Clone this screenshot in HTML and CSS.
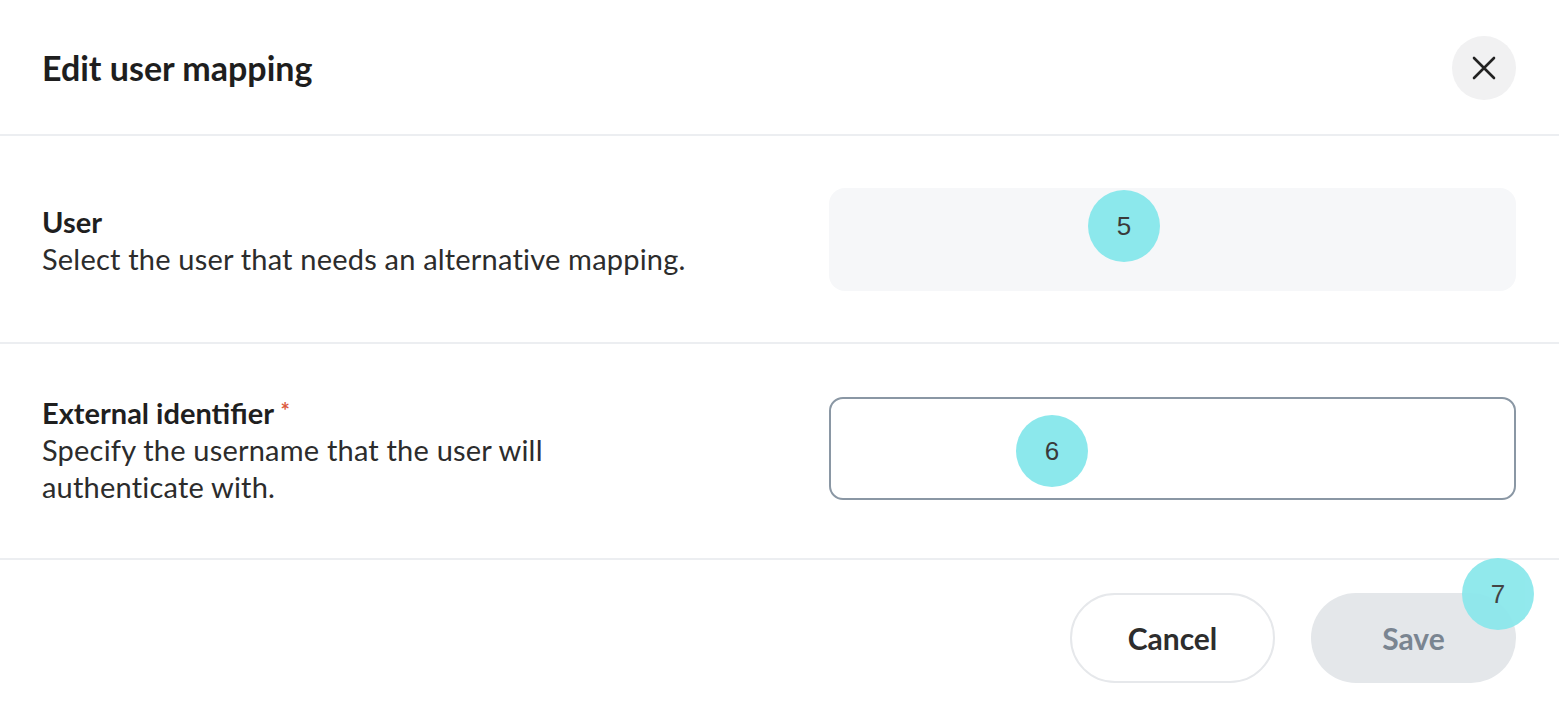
FILE: index.html
```html
<!doctype html>
<html lang="en">
<head>
    <meta charset="utf-8">
    <meta name="viewport" content="width=device-width, initial-scale=1">
    <title>Edit user mapping</title>
    <link rel="stylesheet" href="styles.css">
</head>
<body>
    <div class="modal">
        <header class="modal-header">
            <h1>Edit user mapping</h1>
            <button class="close" type="button" aria-label="Close">
                <svg width="24" height="24" viewBox="0 0 24 24" fill="none" stroke="#222" stroke-width="2.6" stroke-linecap="round">
                    <path d="M2 2L22 22M22 2L2 22"/>
                </svg>
            </button>
        </header>

        <section class="row">
            <div class="label">
                <h2>User</h2>
                <p>Select the user that needs an alternative mapping.</p>
            </div>
            <div class="field field-select">
                <span class="badge badge-5">5</span>
            </div>
        </section>

        <section class="row row-last">
            <div class="label">
                <h2>External identifier <span class="required">*</span></h2>
                <p>Specify the username that the user will authenticate with.</p>
            </div>
            <div class="field field-input">
                <span class="badge badge-6">6</span>
            </div>
        </section>

        <footer class="modal-footer">
            <button class="btn btn-cancel" type="button">Cancel</button>
            <button class="btn btn-save" type="button" disabled>
                Save
                <span class="badge badge-7">7</span>
            </button>
        </footer>
    </div>
</body>
</html>
```

FILE: styles.css
```css
/*
 * Reset
 */

*,
*::before,
*::after {
    box-sizing: border-box;
    margin: 0;
    padding: 0;
}

body {
    background-color: white;
    font-family: Lato, "Open Sans", sans-serif;
    height: 707px;
    overflow: hidden;
}

.modal {
    background-color: white;
    height: 699px;
    margin-top: 8px;
}

.modal-header {
    align-items: center;
    border-bottom: 2px solid #eceef1;
    display: flex;
    justify-content: space-between;
    padding: 28px 43px 34px 42px;
}

h1 {
    color: #1e1e1e;
    font-size: 34px;
    font-weight: 700;
    line-height: 1;
}

.close {
    align-items: center;
    background-color: #f1f1f2;
    border: none;
    border-radius: 50%;
    display: flex;
    height: 64px;
    justify-content: center;
    width: 64px;
}

.row {
    align-items: center;
    border-bottom: 2px solid #eceef1;
    display: flex;
    justify-content: space-between;
    padding: 52px 43px 51px 42px;
}

.row-last {
    padding: 48px 43px 53px 42px;
}

.label {
    color: #2c2c2c;
    font-size: 29px;
    letter-spacing: 0.2px;
    line-height: 37px;
    max-width: 660px;
}

.label h2 {
    color: #1f1f1f;
    font-size: 29px;
    font-weight: 700;
    letter-spacing: 0;
}

.required {
    color: #dc5a3c;
    font-size: 22px;
    vertical-align: 5px;
}

.field {
    height: 103px;
    position: relative;
    width: 687px;
}

.field-select {
    background-color: #f6f7f9;
    border-radius: 16px;
}

.field-input {
    border: 2px solid #8a97a4;
    border-radius: 14px;
}

.badge {
    align-items: center;
    background-color: #8ce8ec;
    border-radius: 50%;
    color: #3a3a3a;
    display: flex;
    font-family: "Liberation Sans", Arial, sans-serif;
    font-size: 26px;
    font-weight: 400;
    height: 72px;
    justify-content: center;
    position: absolute;
    width: 72px;
}

.badge-5 {
    left: 259px;
    top: 2px;
}

.badge-6 {
    left: 185px;
    top: 16px;
}

.badge-7 {
    left: 151px;
    opacity: 0.95;
    top: -35px;
}

.modal-footer {
    display: flex;
    gap: 36px;
    justify-content: flex-end;
    padding: 33px 43px 0 42px;
}

.btn {
    border-radius: 45px;
    font-family: Lato, "Open Sans", sans-serif;
    font-size: 30px;
    font-weight: 700;
    height: 90px;
    position: relative;
    width: 205px;
}

.btn-cancel {
    background-color: white;
    border: 2px solid #e6e8eb;
    color: #2d2d2d;
}

.btn-save {
    background-color: #e4e7ea;
    border: none;
    color: #7a8591;
}
```
